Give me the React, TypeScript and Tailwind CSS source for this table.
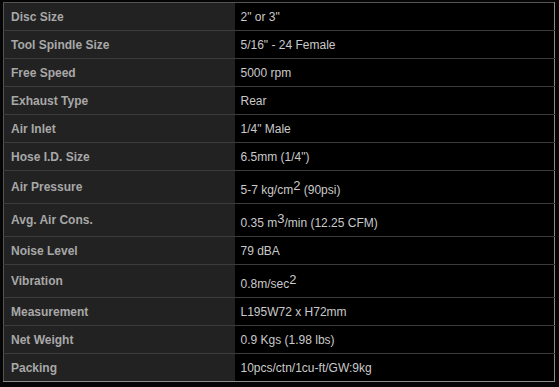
import React from "react";

type Row = { label: string; value: React.ReactNode; tall?: boolean };

const Sup = ({ children }: { children: React.ReactNode }) => (
  <sup className="text-[13px] align-super leading-none relative top-[1px]">{children}</sup>
);

const rows: Row[] = [
  { label: "Disc Size", value: '2" or 3"' },
  { label: "Tool Spindle Size", value: '5/16" - 24 Female' },
  { label: "Free Speed", value: "5000 rpm" },
  { label: "Exhaust Type", value: "Rear" },
  { label: "Air Inlet", value: '1/4" Male' },
  { label: "Hose I.D. Size", value: '6.5mm (1/4")' },
  {
    label: "Air Pressure",
    value: (
      <>
        5-7 kg/cm<Sup>2</Sup> (90psi)
      </>
    ),
    tall: true,
  },
  {
    label: "Avg. Air Cons.",
    value: (
      <>
        0.35 m<Sup>3</Sup>/min (12.25 CFM)
      </>
    ),
    tall: true,
  },
  { label: "Noise Level", value: "79 dBA" },
  {
    label: "Vibration",
    value: (
      <>
        0.8m/sec<Sup>2</Sup>
      </>
    ),
    tall: true,
  },
  { label: "Measurement", value: "L195W72 x H72mm" },
  { label: "Net Weight", value: "0.9 Kgs (1.98 lbs)" },
  { label: "Packing", value: "10pcs/ctn/1cu-ft/GW:9kg" },
];

export default function App() {
  return (
    <div
      className="w-[559px] h-[387px] bg-[#050505] pt-[2px] pl-[3px]"
      style={{ fontFamily: '"Liberation Sans", Arial, sans-serif' }}
    >
      <table className="border-collapse w-[552px] border border-t-[#555] border-l-[#555] border-r-[#8c8c8c] border-b-[#8c8c8c]">
        <tbody>
          {rows.map((r, i) => (
            <tr
              key={r.label}
              className={i < rows.length - 1 ? "border-b border-[#3c3c3c]" : ""}
            >
              <td
                className={`bg-[#222222] w-[231px] pl-[7px] pr-[4px] align-middle font-bold text-[12px] leading-[14px] text-[#a8a8a8] ${
                  r.tall ? "h-[33px]" : "h-[28px]"
                }`}
              >
                {r.label}
              </td>
              <td className="bg-[#000000] pl-[6px] pr-[4px] align-middle text-[12px] leading-[14px] text-[#cacaca]">
                {r.value}
              </td>
            </tr>
          ))}
        </tbody>
      </table>
    </div>
  );
}
